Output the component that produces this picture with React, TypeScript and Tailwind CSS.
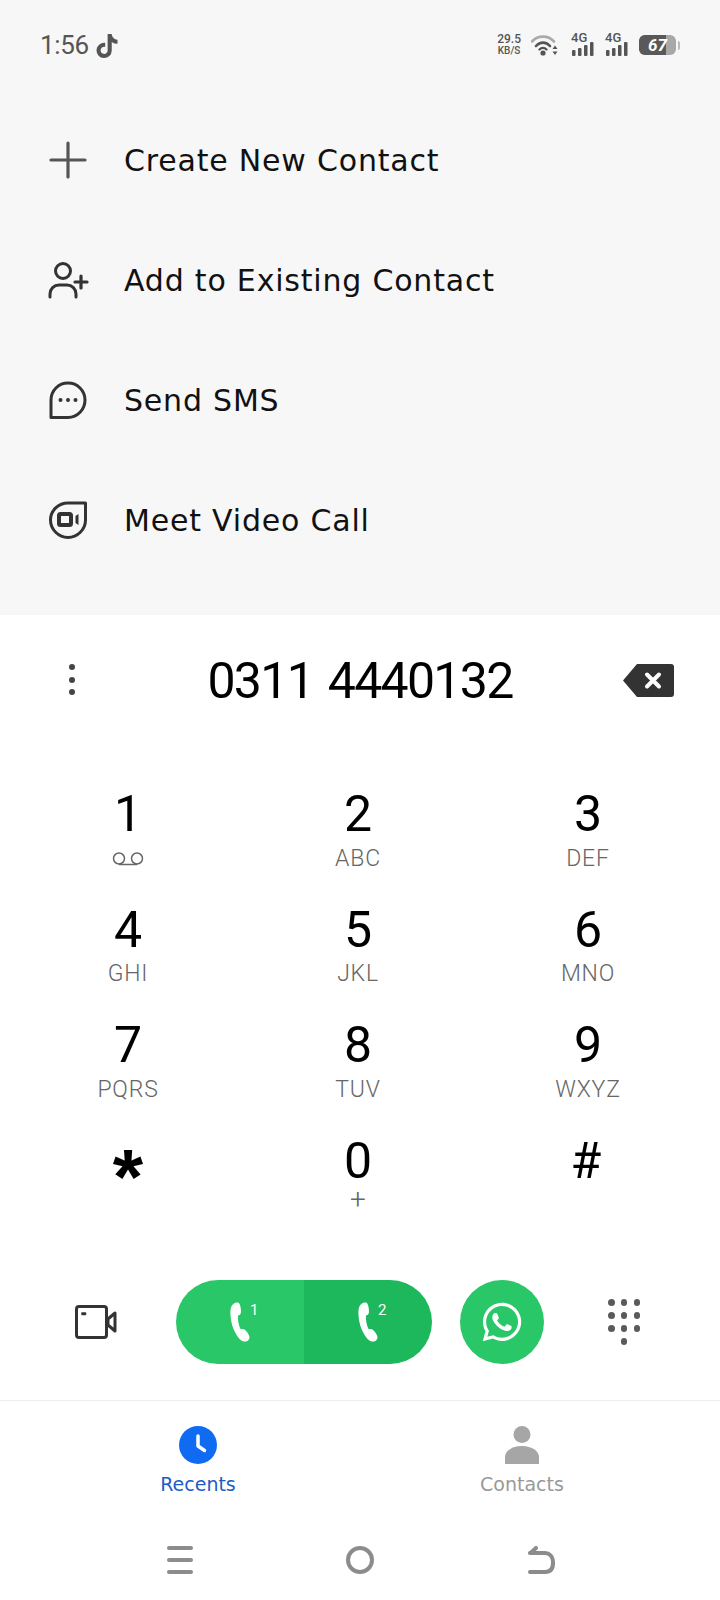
import React from 'react';
import { FaTiktok, FaWhatsapp } from 'react-icons/fa';

const Wifi = () => (
  <svg width="28" height="22" viewBox="0 0 28 22" fill="none" strokeLinecap="round">
    <path d="M1 7.500C7 1 17 1 23 7.500" stroke="#aaaaaa" strokeWidth="2.600" />
    <path d="M5 12C9 7.500 15 7.500 19 12" stroke="#555555" strokeWidth="2.600" />
    <path d="M8.500 15.500C10.500 13.500 13.500 13.500 15.500 15.500" stroke="#555555" strokeWidth="2.400" />
    <circle cx="12" cy="19" r="2.600" fill="#555555" />
    <path d="M24 11.500l2.500 3.500h-5zM24 21l2.500-3.500h-5z" fill="#555555" />
  </svg>
);

const Signal = () => (
  <div className="relative w-[24px] h-[22px]">
    <span className="absolute left-0 top-[-3px] text-[13px] leading-[14px] font-medium text-[#555555] [font-family:'Roboto',sans-serif]">4G</span>
    <svg className="absolute left-0 top-0" width="24" height="22" viewBox="0 0 24 22" fill="#555555">
      <rect x="1" y="16" width="3.500" height="6" rx="1" />
      <rect x="7" y="14" width="3.500" height="8" rx="1" />
      <rect x="13" y="11" width="3.500" height="11" rx="1" />
      <rect x="19" y="8" width="3.500" height="14" rx="1" />
    </svg>
  </div>
);

const Battery = () => (
  <div className="flex items-center gap-[2px]">
    <div className="relative w-[37px] h-[20px] rounded-[6px] overflow-hidden bg-[#a8a8a8] flex">
      <div className="w-[27px] h-full bg-[#595959]" />
      <span className="absolute inset-0 text-center text-white italic font-bold text-[17px] leading-[20px] [font-family:'Roboto',sans-serif]">67</span>
    </div>
    <div className="w-[2px] h-[9px] rounded-r-sm bg-[#bbbbbb]" />
  </div>
);

const StatusBar = () => (
  <div className="h-[100px] pl-[40px] pr-[40px] pt-[33px] flex justify-between items-start text-[#555555]">
    <div className="flex items-center h-[25px] gap-[6px]">
      <span className="text-[26px] leading-[25px] tracking-[-0.3px] [font-family:'Roboto',sans-serif]">1:56</span>
      <FaTiktok size={24} color="#555555" />
    </div>
    <div className="flex items-center gap-[10px] h-[24px]">
      <div className="flex flex-col items-center font-medium [font-family:'Roboto',sans-serif]">
        <span className="text-[12px] leading-[11px]">29.5</span>
        <span className="text-[10px] leading-[11px]">KB/S</span>
      </div>
      <Wifi />
      <div className="flex gap-[10px] ml-[2px]">
        <Signal />
        <Signal />
      </div>
      <Battery />
    </div>
  </div>
);

const PlusIcon = () => (
  <svg width="40" height="40" viewBox="0 0 40 40" fill="none" stroke="#555555" strokeWidth="3.200" strokeLinecap="round">
    <path d="M20 3v34M3 20h34" />
  </svg>
);

const AddPersonIcon = () => (
  <svg width="42" height="40" viewBox="0 0 42 40" fill="none" stroke="#333333" strokeWidth="3" strokeLinecap="round">
    <circle cx="15" cy="11" r="7.500" />
    <path d="M2 37v-3c0-5 4-9 9-9h8c5 0 9 4 9 9v3" />
    <path d="M33 16v12M27 22h12" strokeWidth="3.200" />
  </svg>
);

const SmsIcon = () => (
  <svg width="40" height="40" viewBox="0 0 40 40" fill="none">
    <path d="M3 37.500V20C3 10.500 10.500 3 20 3s17 7.500 17 17-7.500 17.500-17 17.500z" stroke="#333333" strokeWidth="3" strokeLinejoin="round" />
    <circle cx="12.500" cy="20" r="2" fill="#333333" />
    <circle cx="20" cy="20" r="2" fill="#333333" />
    <circle cx="27.500" cy="20" r="2" fill="#333333" />
  </svg>
);

const MeetIcon = () => (
  <svg width="40" height="40" viewBox="0 0 40 40" fill="none">
    <path d="M37.500 3v17c0 9.500-8 17.500-17.500 17.500S2.500 29.500 2.500 20 10.500 3 20 3z" stroke="#333333" strokeWidth="3" strokeLinejoin="round" />
    <rect x="11" y="14" width="12" height="11" rx="1.500" stroke="#333333" strokeWidth="4" />
    <path d="M27.500 16l3-2v11l-3-2z" fill="#333333" />
  </svg>
);

const menu = [
  { icon: PlusIcon, label: 'Create New Contact' },
  { icon: AddPersonIcon, label: 'Add to Existing Contact' },
  { icon: SmsIcon, label: 'Send SMS' },
  { icon: MeetIcon, label: 'Meet Video Call' },
];

const Voicemail = () => (
  <svg width="34" height="14" viewBox="0 0 34 14" fill="none" stroke="#666666" strokeWidth="1.500">
    <circle cx="8" cy="6.500" r="5.500" />
    <circle cx="26" cy="6.500" r="5.500" />
    <path d="M8 12.500h18" />
  </svg>
);

const keys: { digit: string; sub: React.ReactNode }[] = [
  { digit: '1', sub: <Voicemail /> },
  { digit: '2', sub: 'ABC' },
  { digit: '3', sub: 'DEF' },
  { digit: '4', sub: 'GHI' },
  { digit: '5', sub: 'JKL' },
  { digit: '6', sub: 'MNO' },
  { digit: '7', sub: 'PQRS' },
  { digit: '8', sub: 'TUV' },
  { digit: '9', sub: 'WXYZ' },
  { digit: '*', sub: '' },
  { digit: '0', sub: '+' },
  { digit: '#', sub: '' },
];

const Handset = () => (
  <svg width="20" height="40" viewBox="0 0 20 40" fill="#ffffff">
    <path d="M7.500 0.500C4 0.500 1 3 0.500 8 0 15 1.500 24 5.500 31c2.500 4.500 5 8 8.500 8.500 3.500 0.500 5.500-2 5.500-4.500 0-2-3-6-5-7.500-1.500-1-3-0.500-4-0.500C8.500 23 7.500 17 8 13.500c1 0 3-1 3-3.500 0-3-0.500-9.500-3.500-9.500z" />
  </svg>
);

const DialpadIcon = () => (
  <div className="grid grid-cols-3 gap-x-[6.500px] gap-y-[6.500px] w-[32px]">
    {Array.from({ length: 11 }).map((_, i) =>
      i === 9 ? <span key={i} /> : <span key={i} className="w-[6.500px] h-[6.500px] rounded-full bg-[#5a5a5a]" />
    )}
  </div>
);

const VideoIcon = () => (
  <svg width="42" height="34" viewBox="0 0 42 34" fill="none" stroke="#333333" strokeWidth="3" strokeLinejoin="round">
    <rect x="1.500" y="1.500" width="30" height="31" rx="2.500" />
    <path d="M33 14l7-6v18l-7-6z" />
    <rect x="7" y="8" width="3.500" height="1.500" fill="#333333" strokeWidth="1.500" />
  </svg>
);

const App = () => {
  return (
    <div className="w-[720px] h-[1600px] bg-white overflow-hidden flex flex-col">
      <div className="bg-[#f7f7f7] h-[615px]">
        <StatusBar />
        {menu.map((item) => (
          <div key={item.label} className="h-[120px] flex items-center pl-[48px]">
            <div className="w-[76px]">
              <item.icon />
            </div>
            <span className="pt-[1px] text-[30px] leading-[36px] tracking-[0.8px] text-[#111111] [font-family:'DejaVu_Sans',sans-serif]">{item.label}</span>
          </div>
        ))}
      </div>

      <div className="h-[130px] relative flex items-center justify-center">
        <div className="absolute left-[68.500px] top-[49px] flex flex-col gap-[6.500px]">
          <span className="w-[6px] h-[6px] rounded-full bg-[#444444]" />
          <span className="w-[6px] h-[6px] rounded-full bg-[#444444]" />
          <span className="w-[6px] h-[6px] rounded-full bg-[#444444]" />
        </div>
        <span className="pt-[2px] text-[50px] leading-[60px] tracking-[-1.700px] [word-spacing:4px] text-black [font-family:'Roboto',sans-serif]">0311 4440132</span>
        <svg className="absolute left-[623px] top-[49px]" width="51" height="33" viewBox="0 0 51 33">
          <path d="M14 0h34a3 3 0 0 1 3 3v27a3 3 0 0 1-3 3H14L0 16.500z" fill="#333333" />
          <path d="M24 10.500l12 12M36 10.500l-12 12" stroke="#ffffff" strokeWidth="4" strokeLinecap="round" />
        </svg>
      </div>

      <div className="mt-[42px] grid grid-cols-3 pl-[13px] pr-[17px]">
        {keys.map((k) => (
          <div key={k.digit} className="h-[115.500px] flex flex-col items-center [font-family:'Roboto',sans-serif]">
            {k.digit === '*' ? (
              <span className="h-[57px] text-[78px] leading-[86px] font-bold text-black [font-family:'Liberation_Sans',sans-serif]">*</span>
            ) : (
              <span className={k.digit === '#'
                ? 'h-[57px] mr-[4px] text-[50px] leading-[54px] text-black'
                : 'h-[57px] text-[50px] leading-[54px] text-black'}>{k.digit}</span>
            )}
            <span className={k.digit === '0'
              ? 'h-[30px] mt-[-6px] flex items-center text-[28px] font-light text-[#666666]'
              : 'h-[30px] flex items-center text-[23px] tracking-[0.8px] font-light text-[#666666]'}>{k.sub}</span>
          </div>
        ))}
      </div>

      <div className="mt-[31px] h-[84px] flex items-center pl-[75px]">
        <VideoIcon />
        <div className="ml-[59px] w-[256px] h-[84px] rounded-full overflow-hidden flex">
          <div className="w-[128px] bg-[#2ac769] flex items-center pl-[54px] relative">
            <Handset />
            <span className="absolute left-[74px] top-[21px] text-white text-[15px] leading-[18px] [font-family:'Roboto',sans-serif]">1</span>
          </div>
          <div className="w-[128px] bg-[#1db75c] flex items-center pl-[54px] relative">
            <Handset />
            <span className="absolute left-[74px] top-[21px] text-white text-[15px] leading-[18px] [font-family:'Roboto',sans-serif]">2</span>
          </div>
        </div>
        <div className="ml-[28px] w-[84px] h-[84px] rounded-full bg-[#2ac769] flex items-center justify-center">
          <FaWhatsapp size={44} color="#ffffff" />
        </div>
        <div className="ml-[64px]">
          <DialpadIcon />
        </div>
      </div>

      <div className="mt-[36px] h-[1px] bg-[#eeeeee]" />

      <div className="h-[100px] flex pt-[25px] [font-family:'DejaVu_Sans',sans-serif]">
        <div className="w-[396px] flex flex-col items-center gap-[7px]">
          <svg width="38" height="38" viewBox="0 0 38 38">
            <circle cx="19" cy="19" r="19" fill="#0f6cf2" />
            <path d="M19 10v10l6.500 4.500" stroke="#ffffff" strokeWidth="3.500" fill="none" strokeLinecap="round" strokeLinejoin="round" />
          </svg>
          <span className="text-[19px] leading-[26px] text-[#1a5dc4]">Recents</span>
        </div>
        <div className="w-[252px] flex flex-col items-center gap-[7px]">
          <svg width="36" height="38" viewBox="0 0 36 38" fill="#a6a6a6">
            <circle cx="18" cy="8.500" r="8.500" />
            <path d="M1 38v-7c0-6 7-11 17-11s17 5 17 11v7z" />
          </svg>
          <span className="text-[19px] leading-[26px] text-[#999999]">Contacts</span>
        </div>
      </div>

      <div className="pt-[45px] pl-[167px] flex items-center">
        <div className="w-[26px] flex flex-col gap-[8px]">
          <span className="h-[4px] rounded-full bg-[#8c8c8c]" />
          <span className="h-[4px] rounded-full bg-[#8c8c8c]" />
          <span className="h-[4px] rounded-full bg-[#8c8c8c]" />
        </div>
        <div className="ml-[153px] w-[28px] h-[28px] rounded-full border-[4px] border-[#8c8c8c]" />
        <svg className="ml-[154px]" width="27" height="28" viewBox="0 0 27 28" fill="none" stroke="#8c8c8c" strokeWidth="4" strokeLinecap="round" strokeLinejoin="round">
          <path d="M2 7h15c4 0 8 3 8 10s-4 9-8 9H2" />
          <path d="M8 2L2.500 7" />
        </svg>
      </div>
    </div>
  );
};

export default App;
